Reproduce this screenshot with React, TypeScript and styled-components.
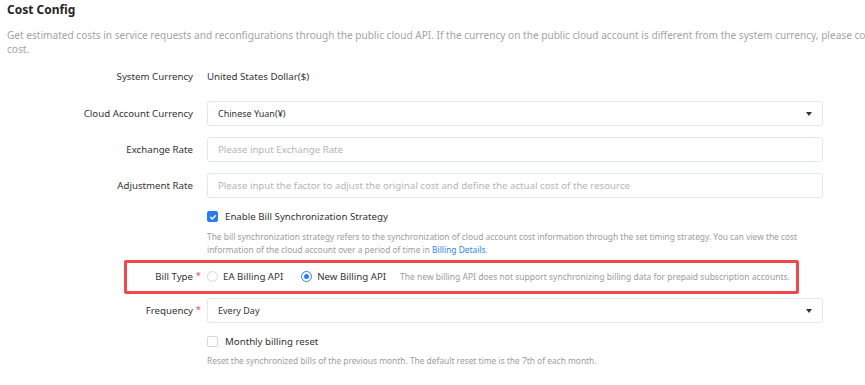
import React from 'react';
import styled, { createGlobalStyle } from 'styled-components';

const GlobalStyle = createGlobalStyle`
  body {
    margin: 0;
    background: #fff;
    font-family: "Noto Sans", "Open Sans", Arial, sans-serif;
    overflow: hidden;
  }
`;

const Page = styled.div`
  width: 865px;
  height: 385px;
  overflow: hidden;
  padding-left: 7px;
  box-sizing: border-box;
  color: #333;
`;

const Title = styled.h2`
  margin: 0;
  font-size: 12px;
  font-weight: 700;
  line-height: 20px;
  color: #262626;
`;

const Description = styled.p`
  margin: 8px 0 0;
  font-size: 10.1px;
  line-height: 14px;
  color: #a3a3a3;
  white-space: nowrap;
`;

const Form = styled.div`
  display: flex;
  flex-direction: column;
  margin-left: -7px;
`;

const Row = styled.div<{ $top: number; $height?: number }>`
  position: relative;
  display: grid;
  grid-template-columns: 193px 616px;
  column-gap: 14px;
  align-items: center;
  margin-top: ${p => p.$top}px;
  min-height: ${p => p.$height ?? 25}px;
`;

const Label = styled.label<{ $required?: boolean }>`
  position: relative;
  text-align: right;
  font-size: 9.7px;
  color: #333;
  white-space: nowrap;

  &::after {
    content: ${p => (p.$required ? "'*'" : 'none')};
    position: absolute;
    right: -8px;
    top: -1px;
    color: #f0474a;
    font-size: 9.5px;
  }
`;

const Value = styled.span`
  font-size: 9.7px;
  color: #333;
`;

const Field = styled.div`
  display: flex;
  align-items: center;
  justify-content: space-between;
  height: 25px;
  box-sizing: border-box;
  padding: 0 10px;
  border: 1px solid #e3e7ef;
  border-radius: 3px;
  background: #fff;
`;

const FieldText = styled.span<{ $placeholder?: boolean }>`
  font-size: ${p => (p.$placeholder ? '9.7px' : '9px')};
  color: ${p => (p.$placeholder ? '#b5b5b5' : '#333')};
`;

const Caret = styled.span`
  width: 0;
  height: 0;
  border-left: 3.5px solid transparent;
  border-right: 3.5px solid transparent;
  border-top: 4px solid #333;
`;

const Check = styled.span<{ $checked?: boolean }>`
  display: inline-flex;
  align-items: center;
  justify-content: center;
  width: 11px;
  height: 11px;
  box-sizing: border-box;
  border-radius: 2px;
  border: 1px solid ${p => (p.$checked ? '#2a7df0' : '#d4d8df')};
  background: ${p => (p.$checked ? '#2a7df0' : '#fff')};
`;

const CheckLine = styled.div`
  grid-column: 2;
  display: flex;
  align-items: center;
  gap: 7px;
  font-size: 9.7px;
  color: #333;
`;

const Help = styled.div<{ $top: number }>`
  margin: ${p => p.$top}px 0 0 207px;
  width: 612px;
  font-size: 8.4px;
  line-height: 13px;
  color: #9c9c9c;
`;

const Link = styled.a`
  color: #2f86ea;
  text-decoration: none;
`;

const Highlight = styled.div`
  position: absolute;
  left: 124px;
  width: 675px;
  top: -4px;
  bottom: -5px;
  border: 3px solid #f2474b;
  border-radius: 2px;
  box-sizing: border-box;
  pointer-events: none;
`;

const Radios = styled.div`
  display: flex;
  align-items: center;
  font-size: 9.7px;
  color: #333;
  white-space: nowrap;
`;

const RadioItem = styled.span<{ $gap: number }>`
  display: inline-flex;
  align-items: center;
  gap: 5px;
  margin-right: ${p => p.$gap}px;
`;

const RadioDot = styled.span<{ $checked?: boolean }>`
  display: inline-flex;
  align-items: center;
  justify-content: center;
  width: 11px;
  height: 11px;
  box-sizing: border-box;
  border-radius: 50%;
  border: 1px solid ${p => (p.$checked ? '#2a7df0' : '#d4d8df')};

  &::after {
    content: '';
    display: ${p => (p.$checked ? 'block' : 'none')};
    width: 5px;
    height: 5px;
    border-radius: 50%;
    background: #2a7df0;
  }
`;

const Note = styled.span`
  font-size: 8.5px;
  color: #9c9c9c;
`;

const Tick = () => (
  <svg width="8" height="8" viewBox="0 0 8 8">
    <path d="M1.3 4.1 L3.2 6 L6.8 2.2" fill="none" stroke="#fff" strokeWidth="1.4" />
  </svg>
);

const App = () => (
  <>
    <GlobalStyle />
    <Page>
      <Title>Cost Config</Title>
      <Description>
        Get estimated costs in service requests and reconfigurations through the public cloud API. If the currency on
        the public cloud account is different from the system currency, please configure the exchange rate to convert the
        <br />
        cost.
      </Description>
      <Form>
        <Row $top={8}>
          <Label>System Currency</Label>
          <Value>United States Dollar($)</Value>
        </Row>
        <Row $top={12}>
          <Label>Cloud Account Currency</Label>
          <Field>
            <FieldText>Chinese Yuan(¥)</FieldText>
            <Caret />
          </Field>
        </Row>
        <Row $top={11}>
          <Label>Exchange Rate</Label>
          <Field>
            <FieldText $placeholder>Please input Exchange Rate</FieldText>
          </Field>
        </Row>
        <Row $top={11}>
          <Label>Adjustment Rate</Label>
          <Field>
            <FieldText $placeholder>
              Please input the factor to adjust the original cost and define the actual cost of the resource
            </FieldText>
          </Field>
        </Row>
        <Row $top={10} $height={17}>
          <CheckLine>
            <Check $checked>
              <Tick />
            </Check>
            Enable Bill Synchronization Strategy
          </CheckLine>
        </Row>
        <Help $top={5}>
          The bill synchronization strategy refers to the synchronization of cloud account cost information through the
          set timing strategy. You can view the cost information of the cloud account over a period of time in{' '}
          <Link>Billing Details</Link>.
        </Help>
        <Row $top={8}>
          <Highlight />
          <Label $required>Bill Type</Label>
          <Radios>
            <RadioItem $gap={18}>
              <RadioDot />
              EA Billing API
            </RadioItem>
            <RadioItem $gap={14}>
              <RadioDot $checked />
              New Billing API
            </RadioItem>
            <Note>The new billing API does not support synchronizing billing data for prepaid subscription accounts.</Note>
          </Radios>
        </Row>
        <Row $top={9}>
          <Label $required>Frequency</Label>
          <Field>
            <FieldText>Every Day</FieldText>
            <Caret />
          </Field>
        </Row>
        <Row $top={10} $height={17}>
          <CheckLine>
            <Check />
            Monthly billing reset
          </CheckLine>
        </Row>
        <Help $top={4}>
          Reset the synchronized bills of the previous month. The default reset time is the 7th of each month.
        </Help>
      </Form>
    </Page>
  </>
);

export default App;
